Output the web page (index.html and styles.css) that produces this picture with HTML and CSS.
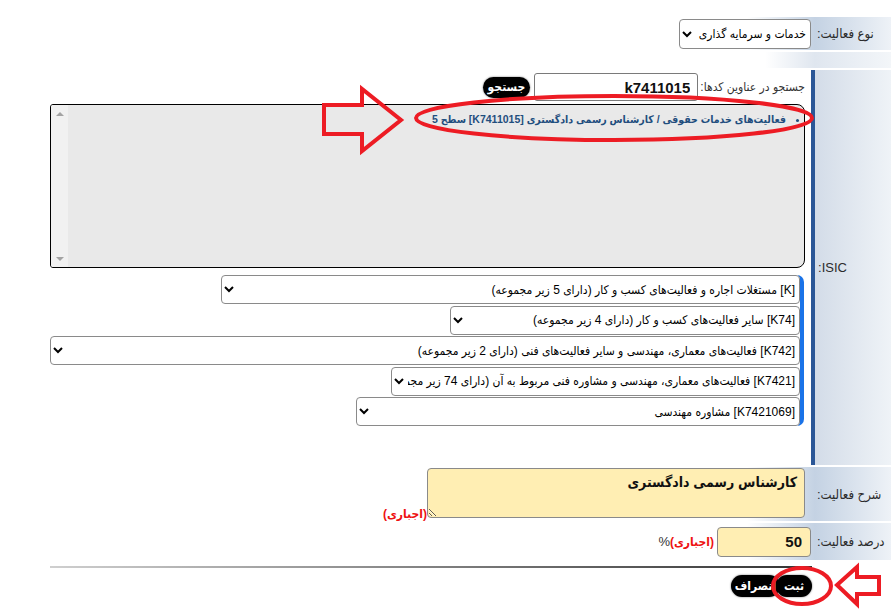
FILE: index.html
```html
<!DOCTYPE html>
<html lang="fa" dir="rtl">
<head>
<meta charset="utf-8">
<title>فعالیت</title>
<link rel="stylesheet" href="styles.css">
</head>
<body>
<div class="page">
  <div class="form">
    <div class="row row-type">
      <div class="label">نوع فعالیت:</div>
      <div class="value type-value">
        <select class="sel type-sel"><option>خدمات و سرمایه گذاری</option></select>
      </div>
    </div>
    <div class="row spacer">
      <div class="label light"></div>
      <div class="value light"></div>
    </div>
    <div class="row row-isic">
      <div class="label isic-label">ISIC:</div>
      <div class="value isic-value">
        <div class="search-line">
          <span class="search-label">جستجو در عناوین کدها:</span>
          <input class="search-input" type="text" value="k7411015">
          <button class="pill search-btn" type="button">جستجو</button>
        </div>
        <div class="listbox">
          <ul class="results">
            <li>فعالیت‌های خدمات حقوقی / کارشناس رسمی دادگستری [K7411015] سطح 5</li>
          </ul>
          <div class="fake-scroll">
            <span class="arrow-up"></span>
            <span class="arrow-down"></span>
          </div>
        </div>
        <div class="cascade">
          <select class="sel lvl lvl1"><option>[K] مستغلات اجاره و فعالیت‌های کسب و کار (دارای 5 زیر مجموعه)</option></select>
          <select class="sel lvl lvl2"><option>[K74] سایر فعالیت‌های کسب و کار (دارای 4 زیر مجموعه)</option></select>
          <select class="sel lvl lvl3"><option>[K742] فعالیت‌های معماری، مهندسی و سایر فعالیت‌های فنی (دارای 2 زیر مجموعه)</option></select>
          <select class="sel lvl lvl4"><option>[K7421] فعالیت‌های معماری، مهندسی و مشاوره فنی مربوط به آن (دارای 74 زیر مجموعه)</option></select>
          <select class="sel lvl lvl5"><option>[K7421069] مشاوره مهندسی</option></select>
        </div>
      </div>
    </div>
    <div class="row row-desc">
      <div class="label">شرح فعالیت:</div>
      <div class="value desc-value">
        <textarea class="desc-area">کارشناس رسمی دادگستری</textarea><span class="required">(اجباری)</span>
      </div>
    </div>
    <div class="row row-pct">
      <div class="label">درصد فعالیت:</div>
      <div class="value pct-value">
        <input class="pct-input" type="text" value="50"><span class="required">(اجباری)</span><span class="pct-sign">%</span>
      </div>
    </div>
  </div>
  <div class="divider"></div>
  <div class="actions">
    <button class="pill submit-btn" type="button">ثبت</button>
    <button class="pill cancel-btn" type="button">انصراف</button>
  </div>
</div>

<svg class="marks" width="891" height="613" viewBox="0 0 891 613" xmlns="http://www.w3.org/2000/svg">
  <g fill="none" stroke="#ed1c24" stroke-width="4" stroke-linejoin="miter">
    <polygon points="324,105 362,105 362,89 401,120 362,151 362,134 324,134"/>
    <ellipse cx="614" cy="118" rx="198" ry="22"/>
    <ellipse cx="802" cy="586" rx="29" ry="18"/>
    <polygon points="837,585 857,567 857,577 879,577 879,594 857,594 857,604"/>
  </g>
</svg>
</body>
</html>
```
FILE: styles.css
```css
* { box-sizing: border-box; }
html, body { margin: 0; padding: 0; background: #fff; }
body {
  width: 891px;
  height: 613px;
  overflow: hidden;
  position: relative;
  font-family: "Liberation Sans", "DejaVu Sans Condensed", "DejaVu Sans", sans-serif;
  font-size: 13px;
  color: #2b2b2b;
}
.page { direction: rtl; padding-top: 17px; }
.form { display: flex; flex-direction: column; gap: 2px; }
.row { display: flex; }
.label {
  width: 76px;
  flex: none;
  display: flex;
  align-items: center;
  justify-content: flex-end;
  padding-left: 2px;
  background: linear-gradient(to right, #c4d2e3, #eef2f7);
  white-space: nowrap;
}
.value {
  flex: 1;
  display: flex;
  align-items: center;
  padding-left: 50px;
  background: linear-gradient(to right, #fff calc(100% - 68px), #c4d2e3);
}
.label.light { background: linear-gradient(to right, #dfe6ef, #f3f6f9); }
.value.light { background: linear-gradient(to right, #fff calc(100% - 50px), #dfe6ef); }

.row-type { height: 33px; }
.spacer { height: 16px; }
.row-isic { height: 395px; }
.row-desc { height: 54px; }
.row-pct { height: 37px; }

.sel {
  font-family: "Liberation Sans", "DejaVu Sans Condensed", "DejaVu Sans", sans-serif;
  font-size: 12px;
  color: #000;
  background: #fff;
  border: 1px solid #8a8a8a;
  border-radius: 4px;
  direction: rtl;
}
.type-sel { width: 132px; height: 30px; margin-right: 4px; font-size: 12px; }

.isic-label { background: linear-gradient(to right, #d3dce8, #eff3f7); padding-left: 3px; }
.isic-value {
  display: block;
  background: #fff;
  border-right: 4px solid #2b5797;
  padding: 3px 6px 0 50px;
}
.search-line { display: flex; align-items: center; height: 28px; }
.search-label { margin-left: 2px; color: #333; font-size: 12px; }
.search-input {
  width: 164px;
  height: 28px;
  border: 1px solid #7a7a7a;
  border-radius: 3px;
  padding: 0 7px;
  font-family: "Liberation Sans", sans-serif;
  font-weight: bold;
  font-size: 15px;
  color: #111;
  text-align: right;
}
.pill {
  height: 21px;
  padding: 0 7px;
  background: #000;
  color: #fff;
  border: none;
  border-radius: 11px;
  font-family: "Liberation Sans", "DejaVu Sans Condensed", "DejaVu Sans", sans-serif;
  font-weight: bold;
  font-size: 12px;
  box-shadow: 0 0 2px rgba(0,0,0,0.6);
}
.search-btn { margin-right: 4px; padding: 0 5px; }

.listbox {
  margin-top: 3px;
  height: 164px;
  display: flex;
  border: 1px solid #000;
  border-radius: 3px 8px 8px 3px;
  background: #e9e9e9;
  overflow: hidden;
}
.results {
  flex: 1;
  margin: 0;
  padding: 6px 18px 0 0;
  list-style: disc;
  color: #1f4e7e;
  font-weight: bold;
  font-size: 10.5px;
}
.results li { line-height: 16px; }
.fake-scroll {
  width: 17px;
  flex: none;
  background: #f1f1f1;
  display: flex;
  flex-direction: column;
  justify-content: space-between;
  align-items: center;
  padding: 7px 0 6px;
}
.arrow-up, .arrow-down { width: 0; height: 0; border-left: 4px solid transparent; border-right: 4px solid transparent; }
.arrow-up { border-bottom: 4px solid #a3a3a3; }
.arrow-down { border-top: 4px solid #a3a3a3; }

.cascade {
  margin-top: 7px;
  margin-right: 1px;
  display: flex;
  flex-direction: column;
  align-items: flex-start;
  gap: 1.5px;
  border-right: 4px solid #1a73e8;
  border-radius: 0 7px 7px 0;
}
.lvl { height: 29px; }
.lvl1 { width: 579px; }
.lvl2 { width: 350px; }
.lvl3 { width: 750px; }
.lvl4 { width: 409px; }
.lvl5 { width: 444px; }

.desc-value { display: block; padding: 1px 10px 0 50px; }
.desc-area {
  width: 378px;
  height: 50px;
  vertical-align: baseline;
  background: #ffeeb3;
  border: 1px solid #8a8a8a;
  border-radius: 4px;
  padding: 5px 7px;
  font-family: "Liberation Sans", "DejaVu Sans Condensed", "DejaVu Sans", sans-serif;
  font-weight: bold;
  font-size: 14px;
  color: #111;
  resize: both;
}
.required { color: #ee1111; font-weight: bold; font-size: 12px; }
.pct-input {
  width: 94px;
  height: 30px;
  margin-right: 4px;
  background: #ffeeb3;
  border: 1px solid #8a8a8a;
  border-radius: 4px;
  padding: 0 8px;
  font-family: "Liberation Sans", sans-serif;
  font-weight: bold;
  font-size: 15px;
  color: #111;
  text-align: right;
}
.pct-value .required { margin-right: 3px; }
.pct-sign { color: #333; }

.divider {
  margin: 6px 79px 0 50px;
  height: 2px;
  background: linear-gradient(to right, #cfcfcf, #333);
}
.actions {
  display: flex;
  padding-right: 79px;
  margin-top: 7px;
}
.submit-btn { position: relative; z-index: 1; height: 22px; padding: 0 8px; }
.cancel-btn { height: 22px; margin-right: -4px; padding: 0 4px; }

.marks { position: absolute; left: 0; top: 0; pointer-events: none; }
```
